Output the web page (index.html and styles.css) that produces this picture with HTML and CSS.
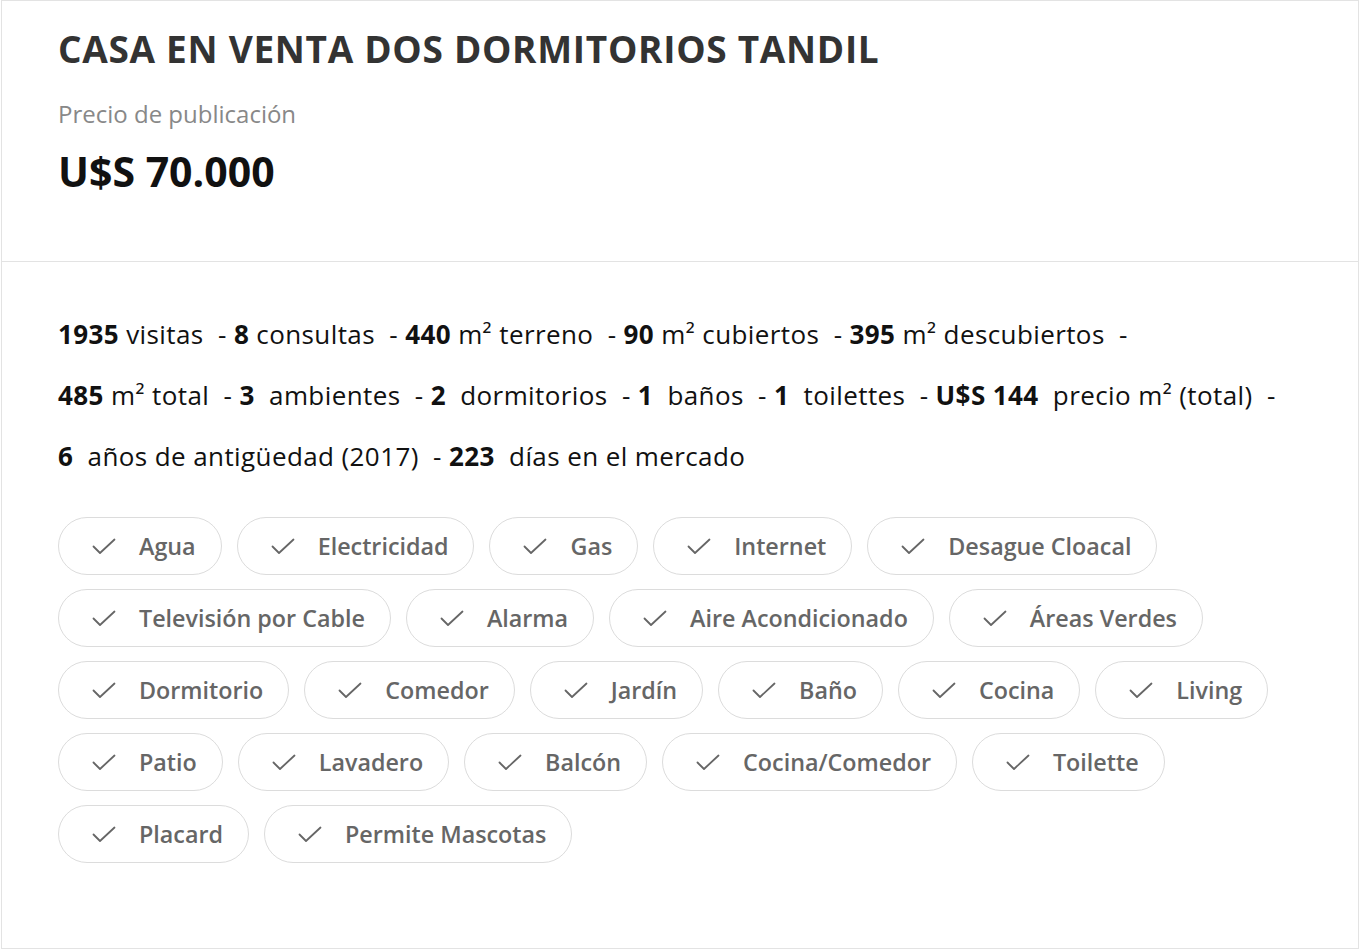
FILE: index.html
```html
<!DOCTYPE html>
<html>
<head>
  <meta charset="utf-8">
  <title>Casa en venta dos dormitorios Tandil</title>
  <link rel="stylesheet" href="styles.css">
</head>
<body>
  <div class="card">
    <div class="card-head">
      <h1>CASA EN VENTA DOS DORMITORIOS TANDIL</h1>
      <p class="price-label">Precio de publicación</p>
      <p class="price">U$S 70.000</p>
    </div>

    <div class="card-body">
      <p class="stats">
        <b>1935</b> visitas &nbsp;- <b>8</b> consultas &nbsp;- <b>440</b> m² terreno &nbsp;- <b>90</b> m² cubiertos &nbsp;- <b>395</b> m² descubiertos &nbsp;-
      </p>
      <p class="stats">
        <b>485</b> m² total &nbsp;- <b>3</b>&nbsp; ambientes &nbsp;- <b>2</b>&nbsp; dormitorios &nbsp;- <b>1</b>&nbsp; baños &nbsp;- <b>1</b>&nbsp; toilettes &nbsp;- <b>U$S 144</b>&nbsp; precio m² (total) &nbsp;-
      </p>
      <p class="stats">
        <b>6</b>&nbsp; años de antigüedad (2017) &nbsp;- <b>223</b>&nbsp; días en el mercado
      </p>

      <ul class="features" id="features"></ul>
    </div>
  </div>

  <script>
    const features = [
      'Agua', 'Electricidad', 'Gas', 'Internet', 'Desague Cloacal',
      'Televisión por Cable', 'Alarma', 'Aire Acondicionado', 'Áreas Verdes',
      'Dormitorio', 'Comedor', 'Jardín', 'Baño', 'Cocina', 'Living',
      'Patio', 'Lavadero', 'Balcón', 'Cocina/Comedor', 'Toilette',
      'Placard', 'Permite Mascotas'
    ];

    const list = document.getElementById('features');
    features.forEach(name => {
      const li = document.createElement('li');
      li.className = 'feature';
      li.innerHTML = '<svg class="check" width="24" height="17" viewBox="0 0 24 17">' +
        '<polyline points="1.5,8.5 8,15 22.5,1.5" fill="none" stroke="#666" stroke-width="1.8" stroke-linecap="round" stroke-linejoin="round"/></svg>' +
        '<span>' + name + '</span>';
      list.appendChild(li);
    });
  </script>
</body>
</html>
```

FILE: styles.css
```css
body {
  margin: 0;
  background: #fff;
  font-family: "Open Sans", "Noto Sans", sans-serif;
  color: #111;
}

.card {
  border: 1px solid #e3e3e3;
  margin-left: 1px;
  height: 949px;
  box-sizing: border-box;
}

.card-head {
  padding: 25px 56px 0;
  height: 261px;
  box-sizing: border-box;
  border-bottom: 1px solid #e3e3e3;
}

h1 {
  margin: 0;
  font-size: 37px;
  font-weight: 700;
  color: #333;
  letter-spacing: 0.7px;
  line-height: 46px;
}

.price-label {
  margin: 26px 0 0;
  font-size: 24px;
  color: #888;
  line-height: 32px;
}

.price {
  margin: 16px 0 0;
  font-size: 41px;
  font-weight: 700;
  color: #111;
  line-height: 50px;
}

.card-body {
  padding: 42px 56px 0;
}

.stats {
  margin: 0;
  font-size: 26px;
  line-height: 61px;
  letter-spacing: 0.4px;
  color: #111;
  white-space: nowrap;
}

.stats b {
  font-weight: 700;
}

.features {
  list-style: none;
  margin: 30px 0 0;
  padding: 0;
  display: flex;
  flex-wrap: wrap;
  gap: 14px 15px;
  max-width: 1230px;
}

.feature {
  display: flex;
  align-items: center;
  gap: 23px;
  height: 58px;
  box-sizing: border-box;
  padding: 0 25px 0 33px;
  border: 1px solid #dcdcdc;
  border-radius: 29px;
  font-size: 23.3px;
  font-weight: 600;
  color: #666;
}

.check {
  flex-shrink: 0;
}
```
